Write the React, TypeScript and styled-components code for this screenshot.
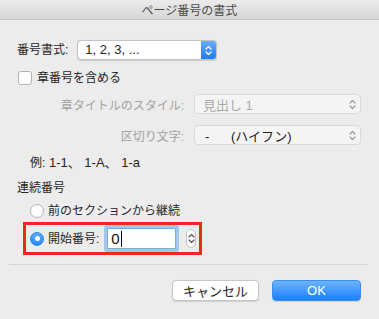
import React, { FC } from 'react';
import styled, { createGlobalStyle } from 'styled-components';

const GlobalStyle = createGlobalStyle`
  html, body {
    margin: 0;
    padding: 0;
    background: #ececec;
  }
  body {
    font-family: "Liberation Sans", "Noto Sans CJK JP", sans-serif;
    font-size: 12px;
    color: #262626;
  }
`;

const Dialog = styled.div`
  width: 379px;
  height: 319px;
  background: #ececec;
  display: flex;
  flex-direction: column;
  overflow: hidden;
`;

const TitleBar = styled.div`
  height: 19px;
  border-bottom: 1px solid #c4c4c4;
  background: linear-gradient(#ebebeb, #d6d6d6);
  display: flex;
  align-items: center;
  justify-content: center;
  font-size: 12px;
  color: #4a4a4a;
`;

const Body = styled.div`
  padding: 0 18px 0 17px;
  display: flex;
  flex-direction: column;
`;

const Row = styled.div<{ $top: number; $indent?: number }>`
  display: flex;
  align-items: center;
  margin-top: ${(p) => p.$top}px;
  padding-left: ${(p) => p.$indent || 0}px;
  line-height: 16px;
`;

const Label = styled.span<{ $muted?: boolean }>`
  color: ${(p) => (p.$muted ? '#a3a3a3' : '#262626')};
  white-space: nowrap;
`;

const Example = styled.span`
  font-size: 13px;
  white-space: pre;
`;

const Popup = styled.div<{ $width: number; $disabled?: boolean; $left?: number }>`
  box-sizing: border-box;
  width: ${(p) => p.$width}px;
  height: 20px;
  margin-left: ${(p) => p.$left || 0}px;
  display: flex;
  align-items: center;
  background: ${(p) => (p.$disabled ? '#f4f4f4' : '#fff')};
  border: 1px solid ${(p) => (p.$disabled ? '#d9d9d9' : '#c3c3c3')};
  border-radius: 4px;
  box-shadow: ${(p) => (p.$disabled ? 'none' : '0 0.5px 1px rgba(0,0,0,0.15)')};
  overflow: hidden;
`;

const PopupText = styled.span<{ $muted?: boolean; $pad: number }>`
  flex: 1;
  padding-left: ${(p) => p.$pad}px;
  font-size: 13px;
  color: ${(p) => (p.$muted ? '#a9a9a9' : '#222')};
  white-space: pre;
`;

const BlueArrows = styled.div`
  width: 15px;
  height: 100%;
  background: linear-gradient(#6aaefc, #1b7cf6);
  display: flex;
  align-items: center;
  justify-content: center;
`;

const GrayArrows = styled.div`
  width: 16px;
  display: flex;
  align-items: center;
  justify-content: center;
`;

const Check = styled.div`
  box-sizing: border-box;
  width: 14px;
  height: 14px;
  background: #fff;
  border: 1px solid #b4b4b4;
  border-radius: 3px;
  margin-left: 1px;
  margin-right: 5px;
`;

const SubGrid = styled.div`
  display: grid;
  grid-template-columns: 167px 167px;
  grid-auto-rows: 20px;
  column-gap: 10px;
  row-gap: 11px;
  margin-top: 8px;
  align-items: center;
  justify-items: end;
`;

const Radio = styled.div<{ $on?: boolean }>`
  box-sizing: border-box;
  width: 14px;
  height: 14px;
  border-radius: 50%;
  margin-right: 4px;
  display: flex;
  align-items: center;
  justify-content: center;
  background: ${(p) => (p.$on ? 'linear-gradient(#5aa9fc, #2a8af8)' : '#fff')};
  border: 1px solid ${(p) => (p.$on ? '#2f86ec' : '#b4b4b4')};
  &::after {
    content: '';
    display: ${(p) => (p.$on ? 'block' : 'none')};
    width: 5px;
    height: 5px;
    border-radius: 50%;
    background: #fff;
  }
`;

const Highlight = styled.div`
  box-sizing: border-box;
  width: 179px;
  height: 33px;
  margin: 3px 0 0 6px;
  border: 3px solid #ea2a20;
  padding-left: 4px;
  display: flex;
  align-items: center;
  line-height: 16px;
`;

const Field = styled.div`
  box-sizing: border-box;
  width: 69px;
  height: 21px;
  margin-left: 8px;
  background: #fff;
  border: 1px solid #7faae0;
  box-shadow: 0 0 0 3px #a3c6f0;
  border-radius: 1px;
  display: flex;
  align-items: center;
  padding-left: 3px;
  font-size: 15px;
  color: #111;
`;

const Caret = styled.span`
  width: 1px;
  height: 16px;
  background: #000;
  margin-left: 1px;
`;

const Stepper = styled.div`
  box-sizing: border-box;
  width: 10px;
  height: 19px;
  margin-left: 10px;
  background: #fff;
  border: 1px solid #c2c2c2;
  border-radius: 5px;
  display: flex;
  align-items: center;
  justify-content: center;
`;

const Separator = styled.div`
  height: 1px;
  background: #d4d4d4;
  margin: 9px 11px 0 9px;
`;

const Buttons = styled.div`
  display: flex;
  justify-content: flex-end;
  gap: 13px;
  padding-right: 18px;
  margin-top: 15px;
`;

const Button = styled.div<{ $primary?: boolean; $width: number }>`
  box-sizing: border-box;
  width: ${(p) => p.$width}px;
  height: 21px;
  border-radius: 4px;
  display: flex;
  align-items: center;
  justify-content: center;
  font-size: 13px;
  color: ${(p) => (p.$primary ? '#fff' : '#262626')};
  background: ${(p) => (p.$primary ? 'linear-gradient(#6db4fb, #1a80fa)' : '#fff')};
  border: 1px solid ${(p) => (p.$primary ? '#3a8ef0' : '#c6c6c6')};
  box-shadow: 0 0.5px 1px rgba(0, 0, 0, 0.12);
`;

const Chevrons: FC<{ color: string; h?: number }> = ({ color, h = 11 }) => (
  <svg width="7" height={h} viewBox="0 0 7 11" fill="none">
    <path d="M1 4 L3.5 1.5 L6 4" stroke={color} strokeWidth="1.2" strokeLinecap="round" strokeLinejoin="round" />
    <path d="M1 7 L3.5 9.5 L6 7" stroke={color} strokeWidth="1.2" strokeLinecap="round" strokeLinejoin="round" />
  </svg>
);

const App: FC = () => {
  return (
    <>
      <GlobalStyle />
      <Dialog>
        <TitleBar>ページ番号の書式</TitleBar>
        <Body>
          <Row $top={20}>
            <Label>番号書式:</Label>
            <Popup $width={140} $left={9}>
              <PopupText $pad={7}>1, 2, 3, ...</PopupText>
              <BlueArrows>
                <Chevrons color="#fff" />
              </BlueArrows>
            </Popup>
          </Row>
          <Row $top={10}>
            <Check />
            <Label>章番号を含める</Label>
          </Row>
          <SubGrid>
            <Label $muted>章タイトルのスタイル:</Label>
            <Popup $width={167} $disabled>
              <PopupText $pad={8} $muted>見出し 1</PopupText>
              <GrayArrows>
                <Chevrons color="#9d9d9d" />
              </GrayArrows>
            </Popup>
            <Label $muted>区切り文字:</Label>
            <Popup $width={167} $disabled>
              <PopupText $pad={10}>-      (ハイフン)</PopupText>
              <GrayArrows>
                <Chevrons color="#9d9d9d" />
              </GrayArrows>
            </Popup>
          </SubGrid>
          <Row $top={10} $indent={13}>
            <Label>例:</Label>
            <Example> 1-1、 1-A、 1-a</Example>
          </Row>
          <Row $top={9}>
            <Label>連続番号</Label>
          </Row>
          <Row $top={7} $indent={13}>
            <Radio />
            <Label>前のセクションから継続</Label>
          </Row>
          <Highlight>
            <Radio $on />
            <Label>開始番号:</Label>
            <Field>
              0<Caret />
            </Field>
            <Stepper>
              <Chevrons color="#555" h={13} />
            </Stepper>
          </Highlight>
        </Body>
        <Separator />
        <Buttons>
          <Button $width={87}>キャンセル</Button>
          <Button $width={89} $primary>OK</Button>
        </Buttons>
      </Dialog>
    </>
  );
};

export default App;
